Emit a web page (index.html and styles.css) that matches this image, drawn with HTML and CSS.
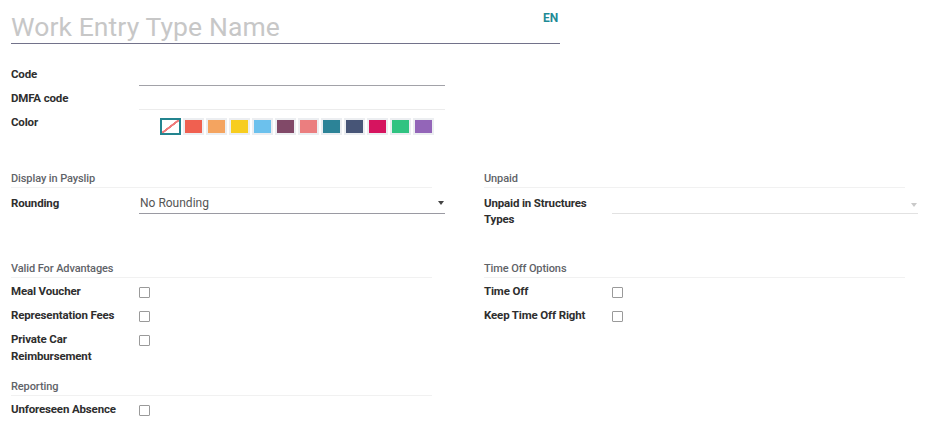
FILE: index.html
```html
<!DOCTYPE html>
<html lang="en">
<head>
<meta charset="utf-8">
<title>Work Entry Type</title>
<link rel="stylesheet" href="styles.css">
</head>
<body>
<div class="sheet">
  <div class="title">
    <div class="name-input">Work Entry Type Name</div>
    <span class="lang">EN</span>
  </div>

  <div class="group g1">
    <div class="row"><div class="label">Code</div><div class="field input"></div></div>
    <div class="row"><div class="label">DMFA code</div><div class="field input light"></div></div>
    <div class="row"><div class="label">Color</div>
      <div class="field colors">
        <span class="swatch none"></span>
        <span class="swatch" style="background:#F06050"></span>
        <span class="swatch" style="background:#F4A460"></span>
        <span class="swatch" style="background:#F7CD1F"></span>
        <span class="swatch" style="background:#6CC1ED"></span>
        <span class="swatch" style="background:#814968"></span>
        <span class="swatch" style="background:#EB7E7F"></span>
        <span class="swatch" style="background:#2C8397"></span>
        <span class="swatch" style="background:#475577"></span>
        <span class="swatch" style="background:#D6145F"></span>
        <span class="swatch" style="background:#30C381"></span>
        <span class="swatch" style="background:#9365B8"></span>
      </div>
    </div>
  </div>

  <div class="cols g2">
    <div class="col">
      <div class="sep">Display in Payslip</div>
      <div class="row first"><div class="label">Rounding</div>
        <div class="field select"><span class="val">No Rounding</span><span class="caret"></span></div>
      </div>
    </div>
    <div class="col">
      <div class="sep">Unpaid</div>
      <div class="row first"><div class="label tight">Unpaid in Structures Types</div>
        <div class="field select light"><span class="val"></span><span class="caret faint"></span></div>
      </div>
    </div>
  </div>

  <div class="cols g3">
    <div class="col">
      <div class="sep">Valid For Advantages</div>
      <div class="row first"><div class="label">Meal Voucher</div><div class="field"><span class="check"></span></div></div>
      <div class="row"><div class="label">Representation Fees</div><div class="field"><span class="check"></span></div></div>
      <div class="row"><div class="label two">Private Car Reimbursement</div><div class="field"><span class="check"></span></div></div>
      <div class="sep reporting">Reporting</div>
      <div class="row first"><div class="label">Unforeseen Absence</div><div class="field"><span class="check"></span></div></div>
    </div>
    <div class="col">
      <div class="sep">Time Off Options</div>
      <div class="row first"><div class="label">Time Off</div><div class="field"><span class="check"></span></div></div>
      <div class="row"><div class="label">Keep Time Off Right</div><div class="field"><span class="check"></span></div></div>
    </div>
  </div>
</div>
</body>
</html>
```

FILE: styles.css
```css
* { box-sizing: border-box; }
html, body { margin: 0; padding: 0; background: #fff; }
body {
  font-family: Roboto, "Liberation Sans", sans-serif;
  font-size: 12px;
  color: #212529;
}
.sheet { padding: 0 15px 0 11px; width: 933px; }

.title { position: relative; height: 45px; width: 549px; }
.name-input {
  position: absolute; left: 0; top: 6px; width: 549px; height: 38px;
  border-bottom: 1px solid #72728a;
  font-size: 26.5px; line-height: 42px; color: #c7c7c7;
  letter-spacing: 0.1px;
}
.lang {
  position: absolute; left: 532px; top: 10px;
  font-size: 12px; font-weight: 700; color: #1f8b96; line-height: 16px;
}

.group.g1 { margin-top: 17px; width: 434px; }
.row { display: flex; align-items: flex-start; min-height: 24px; }
.label {
  width: 128px; flex: none; padding: 3px 10px 3px 0;
  font-weight: 700; line-height: 18px; font-size: 11.5px; color: #2e2e2e;
  letter-spacing: -0.15px;
}
.label.tight { line-height: 16px; padding-top: 4px; }
.label.two { line-height: 17px; padding-top: 4px; }
.field { width: 306px; flex: none; }
.g1 .row { height: 24px; }
.input { height: 24px; border-bottom: 1px solid #a2a2a8; }
.input.light { border-bottom-color: #ececec; }

.colors { display: flex; padding: 8px 0 0 21px; }
.swatch {
  width: 21px; height: 17px; margin-right: 2px; flex: none;
  border: 2px solid #eceef1;
}
.swatch.none {
  border-color: #23848f;
  background: linear-gradient(to bottom right, #fff 44%, #f07a7a 46%, #f07a7a 54%, #fff 56%);
}

.cols { display: grid; grid-template-columns: 434px 434px; column-gap: 39px; }
.g2 { margin-top: 37px; }
.g3 { margin-top: 31px; }
.col { min-width: 0; }

.sep {
  width: 421px; height: 17px; line-height: 16px;
  border-bottom: 1px solid #f1f1f1;
  font-size: 11px; font-weight: 500; color: #5f6368;
  letter-spacing: -0.1px;
}
.sep.reporting { margin-top: 11px; }
.row.first { margin-top: 1px; }
.g2 .row.first { margin-top: 3px; }

.select {
  position: relative; height: 23px; border-bottom: 1px solid #9a9aa2;
  padding: 3px 0 0 1px; line-height: 18px; color: #555;
}
.select.light { border-bottom-color: #e2e2e2; }
.caret {
  position: absolute; right: 1px; top: 10px;
  border-left: 3.5px solid transparent; border-right: 3.5px solid transparent;
  border-top: 4px solid #444;
}
.caret.faint { border-top-color: #c9c9c9; top: 12px; }

.check {
  display: block; width: 11px; height: 11px; margin-top: 8px;
  border: 1px solid #9a9a9a; border-radius: 1px; background: #fff;
}
```
